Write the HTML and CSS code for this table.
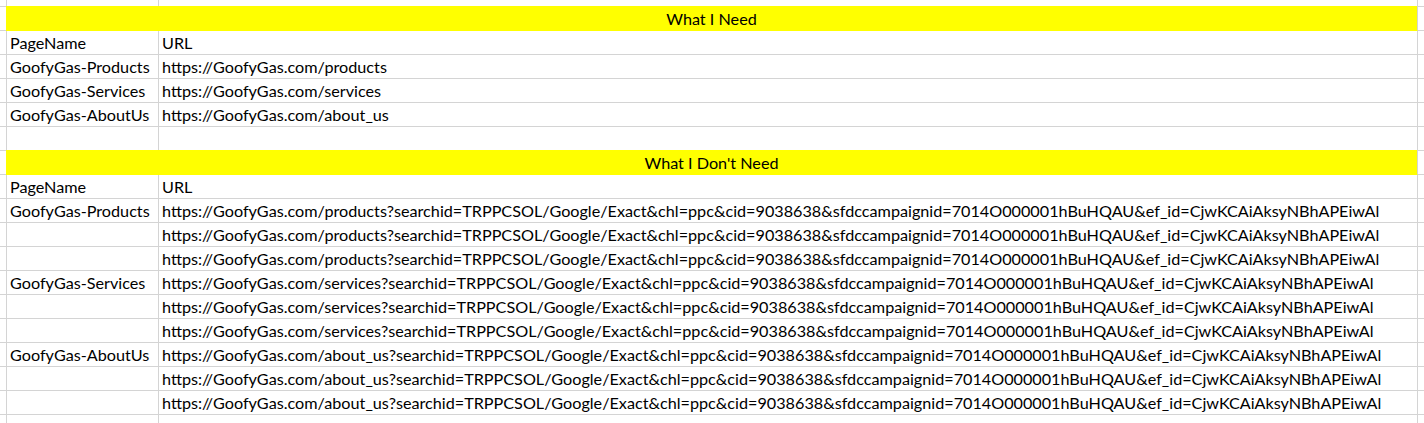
FILE: index.html
```html
<!DOCTYPE html>
<html>
<head>
<meta charset="utf-8">
<title>GoofyGas URLs</title>
<link rel="stylesheet" href="styles.css">
</head>
<body>
<div class="sheet">
  <div class="row top"><div class="cell a"></div><div class="cell b"></div><div class="cell c"></div><div class="cell d"></div></div>

  <div class="row"><div class="cell a"></div><div class="cell merged">What I Need</div><div class="cell d"></div></div>
  <div class="row"><div class="cell a"></div><div class="cell b">PageName</div><div class="cell c">URL</div><div class="cell d"></div></div>
  <div class="row"><div class="cell a"></div><div class="cell b">GoofyGas-Products</div><div class="cell c">https://GoofyGas.com/products</div><div class="cell d"></div></div>
  <div class="row"><div class="cell a"></div><div class="cell b">GoofyGas-Services</div><div class="cell c">https://GoofyGas.com/services</div><div class="cell d"></div></div>
  <div class="row"><div class="cell a"></div><div class="cell b">GoofyGas-AboutUs</div><div class="cell c">https://GoofyGas.com/about_us</div><div class="cell d"></div></div>
  <div class="row"><div class="cell a"></div><div class="cell b"></div><div class="cell c"></div><div class="cell d"></div></div>

  <div class="row"><div class="cell a"></div><div class="cell merged">What I Don't Need</div><div class="cell d"></div></div>
  <div class="row"><div class="cell a"></div><div class="cell b">PageName</div><div class="cell c">URL</div><div class="cell d"></div></div>
  <div class="row"><div class="cell a"></div><div class="cell b">GoofyGas-Products</div><div class="cell c">https://GoofyGas.com/products?searchid=TRPPCSOL/Google/Exact&amp;chl=ppc&amp;cid=9038638&amp;sfdccampaignid=7014O000001hBuHQAU&amp;ef_id=CjwKCAiAksyNBhAPEiwAl</div><div class="cell d"></div></div>
  <div class="row"><div class="cell a"></div><div class="cell b"></div><div class="cell c">https://GoofyGas.com/products?searchid=TRPPCSOL/Google/Exact&amp;chl=ppc&amp;cid=9038638&amp;sfdccampaignid=7014O000001hBuHQAU&amp;ef_id=CjwKCAiAksyNBhAPEiwAl</div><div class="cell d"></div></div>
  <div class="row"><div class="cell a"></div><div class="cell b"></div><div class="cell c">https://GoofyGas.com/products?searchid=TRPPCSOL/Google/Exact&amp;chl=ppc&amp;cid=9038638&amp;sfdccampaignid=7014O000001hBuHQAU&amp;ef_id=CjwKCAiAksyNBhAPEiwAl</div><div class="cell d"></div></div>
  <div class="row"><div class="cell a"></div><div class="cell b">GoofyGas-Services</div><div class="cell c">https://GoofyGas.com/services?searchid=TRPPCSOL/Google/Exact&amp;chl=ppc&amp;cid=9038638&amp;sfdccampaignid=7014O000001hBuHQAU&amp;ef_id=CjwKCAiAksyNBhAPEiwAl</div><div class="cell d"></div></div>
  <div class="row"><div class="cell a"></div><div class="cell b"></div><div class="cell c">https://GoofyGas.com/services?searchid=TRPPCSOL/Google/Exact&amp;chl=ppc&amp;cid=9038638&amp;sfdccampaignid=7014O000001hBuHQAU&amp;ef_id=CjwKCAiAksyNBhAPEiwAl</div><div class="cell d"></div></div>
  <div class="row"><div class="cell a"></div><div class="cell b"></div><div class="cell c">https://GoofyGas.com/services?searchid=TRPPCSOL/Google/Exact&amp;chl=ppc&amp;cid=9038638&amp;sfdccampaignid=7014O000001hBuHQAU&amp;ef_id=CjwKCAiAksyNBhAPEiwAl</div><div class="cell d"></div></div>
  <div class="row"><div class="cell a"></div><div class="cell b">GoofyGas-AboutUs</div><div class="cell c">https://GoofyGas.com/about_us?searchid=TRPPCSOL/Google/Exact&amp;chl=ppc&amp;cid=9038638&amp;sfdccampaignid=7014O000001hBuHQAU&amp;ef_id=CjwKCAiAksyNBhAPEiwAl</div><div class="cell d"></div></div>
  <div class="row"><div class="cell a"></div><div class="cell b"></div><div class="cell c">https://GoofyGas.com/about_us?searchid=TRPPCSOL/Google/Exact&amp;chl=ppc&amp;cid=9038638&amp;sfdccampaignid=7014O000001hBuHQAU&amp;ef_id=CjwKCAiAksyNBhAPEiwAl</div><div class="cell d"></div></div>
  <div class="row"><div class="cell a"></div><div class="cell b"></div><div class="cell c">https://GoofyGas.com/about_us?searchid=TRPPCSOL/Google/Exact&amp;chl=ppc&amp;cid=9038638&amp;sfdccampaignid=7014O000001hBuHQAU&amp;ef_id=CjwKCAiAksyNBhAPEiwAl</div><div class="cell d"></div></div>
  <div class="row"><div class="cell a"></div><div class="cell b"></div><div class="cell c"></div><div class="cell d"></div></div>
</div>
</body>
</html>
```
FILE: styles.css
```css
html, body {
  margin: 0;
  padding: 0;
  background: #ffffff;
  overflow: hidden;
}

.sheet {
  font-family: "Lato", "Open Sans", sans-serif;
  font-size: 16.2px;
  color: #000000;
  display: flex;
  flex-direction: column;
}

.row {
  display: flex;
  height: 24px;
  flex: none;
}

.row.top {
  height: 7px;
}

.cell {
  box-sizing: border-box;
  height: 100%;
  flex: none;
  border-right: 1px solid #d4d4d4;
  border-bottom: 1px solid #d4d4d4;
  line-height: 23px;
  padding-left: 3px;
  white-space: nowrap;
}

.a {
  width: 7px;
  padding-left: 0;
}

.b {
  width: 152px;
}

.c {
  width: 1259px;
}

.d {
  flex: 1;
  border-right: none;
}

.merged {
  width: 1412px;
  height: 25px;
  margin: -1px 0 0 -1px;
  padding: 1px 0 0 0;
  line-height: 23px;
  background: #ffff00;
  border-bottom-color: #ffff00;
  text-align: center;
}
```
